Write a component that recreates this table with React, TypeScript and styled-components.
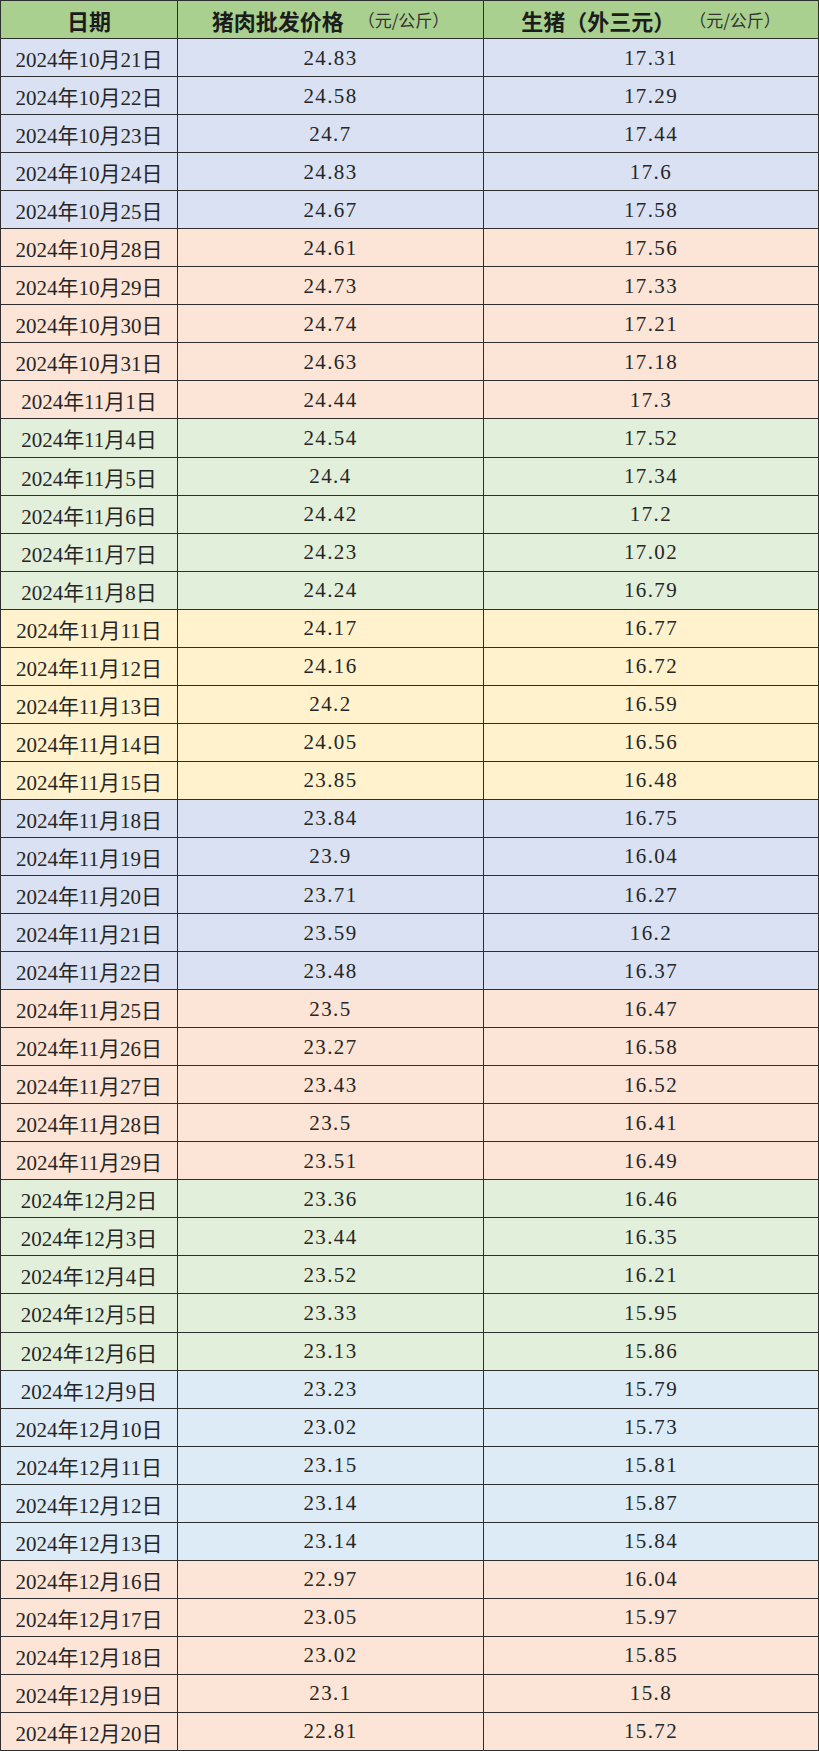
import React from 'react';
import styled, { createGlobalStyle } from 'styled-components';

const GlobalStyle = createGlobalStyle`
  html, body {
    margin: 0;
    padding: 0;
    background: #ffffff;
  }
`;

const palette: Record<string, string> = {
  slate: '#d9e1f2',
  peach: '#fce4d6',
  green: '#e2efda',
  yellow: '#fff2cc',
  sky: '#ddebf7',
};

type Row = [string, string, string];

const groups: { tone: string; rows: Row[] }[] = [
  {
    tone: 'slate',
    rows: [
      ['2024年10月21日', '24.83', '17.31'],
      ['2024年10月22日', '24.58', '17.29'],
      ['2024年10月23日', '24.7', '17.44'],
      ['2024年10月24日', '24.83', '17.6'],
      ['2024年10月25日', '24.67', '17.58'],
    ],
  },
  {
    tone: 'peach',
    rows: [
      ['2024年10月28日', '24.61', '17.56'],
      ['2024年10月29日', '24.73', '17.33'],
      ['2024年10月30日', '24.74', '17.21'],
      ['2024年10月31日', '24.63', '17.18'],
      ['2024年11月1日', '24.44', '17.3'],
    ],
  },
  {
    tone: 'green',
    rows: [
      ['2024年11月4日', '24.54', '17.52'],
      ['2024年11月5日', '24.4', '17.34'],
      ['2024年11月6日', '24.42', '17.2'],
      ['2024年11月7日', '24.23', '17.02'],
      ['2024年11月8日', '24.24', '16.79'],
    ],
  },
  {
    tone: 'yellow',
    rows: [
      ['2024年11月11日', '24.17', '16.77'],
      ['2024年11月12日', '24.16', '16.72'],
      ['2024年11月13日', '24.2', '16.59'],
      ['2024年11月14日', '24.05', '16.56'],
      ['2024年11月15日', '23.85', '16.48'],
    ],
  },
  {
    tone: 'slate',
    rows: [
      ['2024年11月18日', '23.84', '16.75'],
      ['2024年11月19日', '23.9', '16.04'],
      ['2024年11月20日', '23.71', '16.27'],
      ['2024年11月21日', '23.59', '16.2'],
      ['2024年11月22日', '23.48', '16.37'],
    ],
  },
  {
    tone: 'peach',
    rows: [
      ['2024年11月25日', '23.5', '16.47'],
      ['2024年11月26日', '23.27', '16.58'],
      ['2024年11月27日', '23.43', '16.52'],
      ['2024年11月28日', '23.5', '16.41'],
      ['2024年11月29日', '23.51', '16.49'],
    ],
  },
  {
    tone: 'green',
    rows: [
      ['2024年12月2日', '23.36', '16.46'],
      ['2024年12月3日', '23.44', '16.35'],
      ['2024年12月4日', '23.52', '16.21'],
      ['2024年12月5日', '23.33', '15.95'],
      ['2024年12月6日', '23.13', '15.86'],
    ],
  },
  {
    tone: 'sky',
    rows: [
      ['2024年12月9日', '23.23', '15.79'],
      ['2024年12月10日', '23.02', '15.73'],
      ['2024年12月11日', '23.15', '15.81'],
      ['2024年12月12日', '23.14', '15.87'],
      ['2024年12月13日', '23.14', '15.84'],
    ],
  },
  {
    tone: 'peach',
    rows: [
      ['2024年12月16日', '22.97', '16.04'],
      ['2024年12月17日', '23.05', '15.97'],
      ['2024年12月18日', '23.02', '15.85'],
      ['2024年12月19日', '23.1', '15.8'],
      ['2024年12月20日', '22.81', '15.72'],
    ],
  },
];

const Sheet = styled.div`
  width: 819px;
  height: 1751px;
  box-sizing: border-box;
  display: grid;
  grid-template-columns: 177px 306px 1fr;
  grid-template-rows: repeat(46, 1fr);
  border-top: 1px solid #2e2e2e;
  border-left: 1px solid #2e2e2e;
  font-family: 'Liberation Serif', 'Noto Sans CJK SC', serif;
  color: #262626;
`;

const Cell = styled.div<{ $tone: string }>`
  box-sizing: border-box;
  display: flex;
  align-items: center;
  justify-content: center;
  background: ${(p) => p.$tone};
  border-right: 1px solid #2e2e2e;
  border-bottom: 1px solid #2e2e2e;
  white-space: nowrap;
`;

const HeadCell = styled(Cell)`
  font-family: 'Noto Sans CJK SC', sans-serif;
  font-weight: 700;
  font-size: 22px;
  color: #1c1c1c;
`;

const Unit = styled.span`
  font-weight: 400;
  font-size: 17px;
  color: #333333;
  margin-left: 14px;
`;

const DateText = styled.span`
  font-size: 21px;
  padding-top: 1px;
`;

const NumText = styled.span`
  font-size: 21px;
  letter-spacing: 1.4px;
  padding-top: 1px;
`;

export default function App() {
  const header = '#a9d08e';
  return (
    <>
      <GlobalStyle />
      <Sheet>
        <HeadCell $tone={header}>日期</HeadCell>
        <HeadCell $tone={header}>
          猪肉批发价格<Unit>（元/公斤）</Unit>
        </HeadCell>
        <HeadCell $tone={header}>
          生猪（外三元）<Unit>（元/公斤）</Unit>
        </HeadCell>
        {groups.map((g) =>
          g.rows.map(([date, pork, hog]) => (
            <React.Fragment key={date}>
              <Cell $tone={palette[g.tone]}>
                <DateText>{date}</DateText>
              </Cell>
              <Cell $tone={palette[g.tone]}>
                <NumText>{pork}</NumText>
              </Cell>
              <Cell $tone={palette[g.tone]}>
                <NumText>{hog}</NumText>
              </Cell>
            </React.Fragment>
          ))
        )}
      </Sheet>
    </>
  );
}
